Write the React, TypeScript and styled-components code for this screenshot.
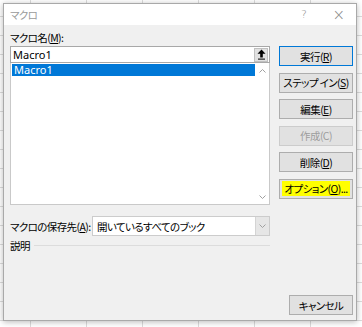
import React from 'react';
import styled, { createGlobalStyle } from 'styled-components';

const GlobalStyle = createGlobalStyle`
  html, body {
    margin: 0;
  }
  body {
    background-color: #ffffff;
    background-image:
      linear-gradient(to right, #dcdcdc 1px, transparent 1px),
      linear-gradient(to bottom, #dcdcdc 1px, transparent 1px);
    background-size: 56px 19px;
    background-position: 30px 0, 0 16px;
  }
`;

const Desktop = styled.div`
  padding: 3px;
  height: 327px;
  box-sizing: border-box;
`;

const Dialog = styled.div`
  width: 354px;
  height: 318px;
  box-sizing: border-box;
  border: 1px solid #a9a9a9;
  background: #f0f0f0;
  box-shadow: 0 1px 6px rgba(0, 0, 0, 0.28);
  display: flex;
  flex-direction: column;
  font-family: 'Noto Sans CJK JP', sans-serif;
  font-size: 10.5px;
  letter-spacing: -0.6px;
  font-feature-settings: 'palt';
  color: #000;
`;

const TitleBar = styled.div`
  height: 21px;
  background: #fff;
  display: flex;
  align-items: center;
  padding-left: 6px;
  color: #9a9a9a;
`;

const Title = styled.span`
  flex: 1;
`;

const TitleButton = styled.span<{ $big?: boolean }>`
  width: 35px;
  text-align: center;
  color: #8a8a8a;
  font-family: 'DejaVu Sans', sans-serif;
  font-size: ${(p) => (p.$big ? '15px' : '11px')};
  font-weight: 300;
`;

const Body = styled.div`
  flex: 1;
  display: grid;
  grid-template-columns: 260px 74px;
  column-gap: 9px;
  padding: 6px 3px 5px 6px;
`;

const LeftCol = styled.div`
  display: flex;
  flex-direction: column;
`;

const Label = styled.div`
  height: 14px;
  line-height: 14px;
  margin-bottom: 1px;
  white-space: nowrap;
`;

const U = styled.span`
  text-decoration: underline;
`;

const NameField = styled.div`
  height: 17px;
  box-sizing: border-box;
  border: 1px solid #a8a8a8;
  background: #fff;
  display: flex;
  align-items: center;
`;

const Latin = styled.span`
  font-family: 'Noto Sans', sans-serif;
  font-size: 11px;
  letter-spacing: 0;
`;

const NameText = styled(Latin)`
  flex: 1;
  padding-left: 2px;
`;

const ArrowButton = styled.span`
  width: 14px;
  height: 14px;
  margin-right: 1px;
  box-sizing: border-box;
  background: #e1e1e1;
  border: 1px solid #c0c0c0;
  display: flex;
  align-items: center;
  justify-content: center;
`;

const ListBox = styled.div`
  height: 142px;
  box-sizing: border-box;
  border: 1px solid #c9c9c9;
  border-top: none;
  background: #fff;
  display: flex;
`;

const Items = styled.div`
  flex: 1;
  padding: 1px 0 0 1px;
`;

const Item = styled(Latin)<{ $selected?: boolean }>`
  display: block;
  height: 12px;
  line-height: 12px;
  padding-left: 2px;
  background: ${(p) => (p.$selected ? '#0078d7' : 'transparent')};
  color: ${(p) => (p.$selected ? '#fff' : '#000')};
`;

const ScrollBar = styled.div`
  width: 14px;
  display: flex;
  flex-direction: column;
  justify-content: space-between;
  align-items: center;
  padding: 6px 0 5px;
`;

const StoreRow = styled.div`
  margin-top: 11px;
  display: flex;
  align-items: center;
`;

const StoreLabel = styled.span`
  width: 82px;
  white-space: nowrap;
`;

const Select = styled.div`
  flex: 1;
  height: 20px;
  box-sizing: border-box;
  border: 1px solid #cccccc;
  background: #fff;
  display: flex;
  align-items: center;
`;

const SelectText = styled.span`
  flex: 1;
  padding-left: 4px;
`;

const DropButton = styled.span`
  width: 13px;
  align-self: stretch;
  background: #e6e6e6;
  border-left: 1px solid #d4d4d4;
  display: flex;
  align-items: center;
  justify-content: center;
`;

const DescRow = styled.div`
  margin-top: 3px;
  height: 12px;
  display: flex;
  align-items: center;
`;

const Rule = styled.span`
  flex: 1;
  height: 1px;
  margin-left: 4px;
  background: #dcdcdc;
`;

const RightCol = styled.div`
  padding-top: 15px;
  display: flex;
  flex-direction: column;
  gap: 6.6px;
`;

const Button = styled.div<{ $default?: boolean; $disabled?: boolean; $narrow?: boolean }>`
  height: 20px;
  box-sizing: border-box;
  background: #e1e1e1;
  border: 1px solid ${(p) => (p.$default ? '#0078d7' : p.$disabled ? '#cccccc' : '#adadad')};
  color: ${(p) => (p.$disabled ? '#9d9d9d' : '#000')};
  display: flex;
  align-items: center;
  justify-content: center;
  white-space: nowrap;
  ${(p) => p.$narrow && 'width: 64px; align-self: flex-end; margin-top: auto;'}
`;

const Marker = styled.span`
  background: #ffff00;
  padding: 0 2px;
`;

const Chevron = ({ up }: { up?: boolean }) => (
  <svg width="7" height="4" viewBox="0 0 7 4">
    <path d={up ? 'M0.5 3.5 L3.5 0.5 L6.5 3.5' : 'M0.5 0.5 L3.5 3.5 L6.5 0.5'} fill="none" stroke="#a0a0a0" strokeWidth="1" />
  </svg>
);

const UpArrow = () => (
  <svg width="9" height="11" viewBox="0 0 9 11">
    <path d="M4.5 0.5 L8.5 4.8 L5.8 4.8 L5.8 8.5 L3.2 8.5 L3.2 4.8 L0.5 4.8 Z" fill="#000" />
    <rect x="1" y="9.6" width="7" height="1" fill="#000" />
  </svg>
);

export default function App() {
  return (
    <Desktop>
      <GlobalStyle />
      <Dialog>
        <TitleBar>
          <Title>マクロ</Title>
          <TitleButton>?</TitleButton>
          <TitleButton $big>×</TitleButton>
        </TitleBar>
        <Body>
          <LeftCol>
            <Label>
              マクロ名(<U>M</U>):
            </Label>
            <NameField>
              <NameText>Macro1</NameText>
              <ArrowButton>
                <UpArrow />
              </ArrowButton>
            </NameField>
            <ListBox>
              <Items>
                <Item $selected>Macro1</Item>
              </Items>
              <ScrollBar>
                <Chevron up />
                <Chevron />
              </ScrollBar>
            </ListBox>
            <StoreRow>
              <StoreLabel>
                マクロの保存先(<U>A</U>):
              </StoreLabel>
              <Select>
                <SelectText>開いているすべてのブック</SelectText>
                <DropButton>
                  <Chevron />
                </DropButton>
              </Select>
            </StoreRow>
            <DescRow>
              説明
              <Rule />
            </DescRow>
          </LeftCol>
          <RightCol>
            <Button $default>
              実行(<U>R</U>)
            </Button>
            <Button>
              ステップ イン(<U>S</U>)
            </Button>
            <Button>
              編集(<U>E</U>)
            </Button>
            <Button $disabled>作成(C)</Button>
            <Button>
              削除(<U>D</U>)
            </Button>
            <Button>
              <Marker>
                オプション(<U>O</U>)...
              </Marker>
            </Button>
            <Button $narrow>キャンセル</Button>
          </RightCol>
        </Body>
      </Dialog>
    </Desktop>
  );
}
